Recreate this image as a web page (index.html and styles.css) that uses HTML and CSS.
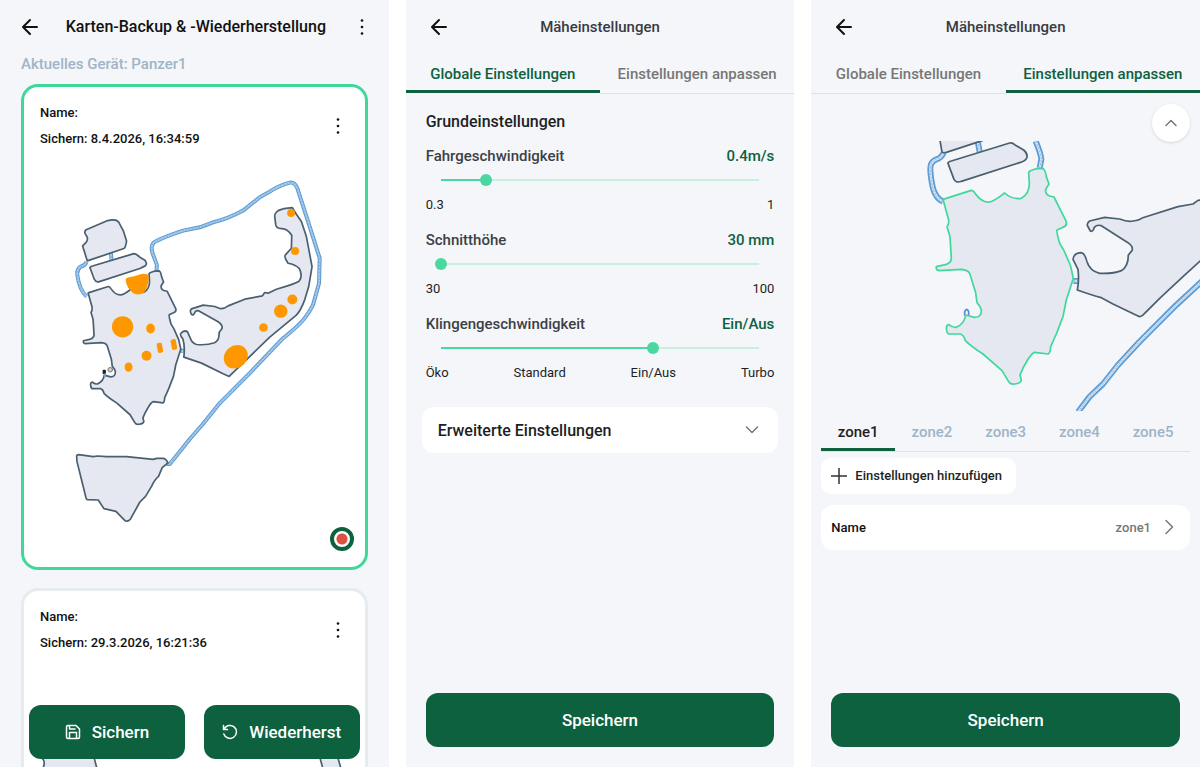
FILE: index.html
```html
<!DOCTYPE html>
<html lang="de">
<head>
<meta charset="utf-8">
<title>Mäheinstellungen</title>
<meta name="viewport" content="width=device-width, initial-scale=1">
<link rel="stylesheet" href="styles.css">
</head>
<body>
<svg class="defs" width="0" height="0" aria-hidden="true">
  <defs>
    <path id="zone-main" vector-effect="non-scaling-stroke" d="M130 208L215 181Q222 181 226 190C240 210 255 218 270 216C285 213 300 200 315 189C330 203 350 207 365 205C380 197 389 180 389 160L387 127Q390 121 412 116L430 115Q437 120 440 140L448 162L438 178Q436 192 450 198L463 201L485 245L500 275Q503 288 490 292L472 300Q470 305 480 340L492 360L512 405L521 445L500 510L490 560L470 612L453 650Q452 670 445 672L405 667Q398 668 385 688Q370 712 361 735L365 750Q364 760 345 762Q332 764 327 755L307 722L250 672Q215 650 197 632Q193 615 182 612L150 612Q142 612 141 600Q138 585 148 584Q160 594 170 592Q195 580 198 555L225 562Q246 562 245 540Q243 530 232 518L228 488L210 430Q205 420 185 418L118 422Q108 420 110 410L140 403Q155 398 155 385L151 320L142 290Q148 285 147 270Z"/>
    <path id="track-home" d="M260 786Q255 798 243 800Q230 808 232 825Q238 870 260 890M333 758L335 782M470 813L471 795L458 760Q450 732 468 724Q500 708 550 692L600 682L640 667Q680 659 730 632L780 592L810 575Q835 558 870 548Q885 546 893 565L930 680L960 775L958 850L940 915Q930 935 915 955Q900 975 845 1020L750 1120L660 1210L610 1272L570 1318L510 1393L500 1393M540 1053H552"/>
    <path id="track-zone" d="M132 68Q125 85 110 88Q92 95 92 115Q92 140 100 175Q108 204 130 215M234 33L240 66M408 33Q425 75 425 88L420 114M521 453H537M910 451L830 525L720 635L655 705L610 762L570 800L535 846"/>
    <symbol id="back" viewBox="0 0 18 18"><path d="M16 9H2.500M9 2L2 9L9 16"/></symbol>
    <symbol id="dots" viewBox="0 0 4 18"><circle cx="2" cy="2.500" r="1.300"/><circle cx="2" cy="9" r="1.300"/><circle cx="2" cy="15.500" r="1.300"/></symbol>
  </defs>
</svg>
<main class="screens">

  <section class="screen" aria-label="Karten-Backup">
    <header class="bar bar-backup">
      <button class="icon-btn" aria-label="Zurück"><svg class="arrow"><use href="#back"/></svg></button>
      <h1 class="title title-dark">Karten-Backup &amp; -Wiederherstellung</h1>
      <button class="icon-btn" aria-label="Menü"><svg class="dots"><use href="#dots"/></svg></button>
    </header>
    <p class="device">Aktuelles Gerät: Panzer1</p>
    <div class="backups">
      <article class="backup backup-active">
        <div class="backup-head">
          <div><p>Name:</p><p>Sichern: 8.4.2026, 16:34:59</p></div>
          <button class="icon-btn" aria-label="Optionen"><svg class="dots"><use href="#dots"/></svg></button>
        </div>
        <svg class="map" viewBox="72 456 1023 1245" role="img" aria-label="Karte">
          <use href="#track-home" class="track"/><use href="#track-home" class="track-mid"/><use href="#track-home" class="track-dash"/>
          <g class="area">
            <path d="M257 690L320 663Q348 655 356 666L370 692L380 723Q377 744 372 746L262 783L248 738L258 728Q264 722 262 712L256 702Q253 696 257 690Z"/>
            <path d="M270 803L273 800L402 761Q408 761 420 772L434 780Q444 790 436 798L420 806L296 846Q288 848 283 838Z"/>
            <use href="#zone-main" transform="translate(172 731) scale(.712)"/>
            <path d="M552 1072L605 1090L670 1122L688 1130L745 1075L810 1012L890 946Q903 932 915 900L927 860L937 800L920 710L905 665L888 640L878 623Q850 625 835 632Q824 640 825 650L828 675Q830 686 845 686Q862 685 876 706L875 745L857 765Q852 770 865 790Q887 794 899 806Q910 830 898 844Q885 852 830 868L805 880L795 878L788 888L735 898L685 918Q672 928 660 926L645 920L610 916L575 927Q569 932 574 942Q581 950 586 936Q592 930 600 935L655 966Q668 974 667 985L658 998Q659 1022 644 1029Q620 1037 590 1034Q576 1030 571 1014L563 996Q553 989 542 1002Q541 1007 549 1017Q556 1040 552 1072Z"/>
            <path d="M230 1368Q231 1365 236 1365L280 1371L293 1369L320 1371H380L460 1379L470 1376H490Q500 1378 504 1390L487 1404L476 1430Q464 1440 455 1460L437 1490L420 1507L392 1558Q382 1570 373 1561L348 1535L312 1527L295 1501L262 1500Q258 1498 257 1490L231 1385Z"/>
          </g>
          <g class="obstacles">
            <path d="M377 838Q380 832 400 830L425 822Q447 820 447 832Q447 850 437 872Q425 890 400 880Q378 862 377 838Z"/>
            <circle cx="368" cy="981" r="32"/><ellipse cx="452" cy="986" rx="13" ry="15"/>
            <rect x="472" y="1029" width="16" height="30" rx="5" transform="rotate(-10 480 1044)"/>
            <rect x="514" y="1018" width="16" height="32" rx="5" transform="rotate(-10 522 1034)"/>
            <circle cx="440" cy="1068" r="15"/><ellipse cx="386" cy="1102" rx="12" ry="14"/>
            <ellipse cx="708" cy="1071" rx="38" ry="33" transform="rotate(-40 708 1071)"/>
            <circle cx="843" cy="934" r="20"/><circle cx="878" cy="899" r="15"/><circle cx="791" cy="983" r="13"/>
            <circle cx="874" cy="639" r="12"/><circle cx="886" cy="753" r="12"/>
          </g>
          <rect class="dock" x="308" y="1110" width="10" height="13" rx="3"/>
          <circle class="mower" cx="331" cy="1110" r="7"/>
          <path class="dock-track" d="M315 1124V1130"/>
        </svg>
        <button class="record" aria-label="Ausgewählt"></button>
      </article>
      <article class="backup">
        <div class="backup-head">
          <div><p>Name:</p><p>Sichern: 29.3.2026, 16:21:36</p></div>
          <button class="icon-btn" aria-label="Optionen"><svg class="dots"><use href="#dots"/></svg></button>
        </div>
        <svg class="map" viewBox="24 656 341 415" role="img" aria-label="Karte">
          <g class="area"><path d="M42 758Q46 762 43 768L41 800H105L94 757ZM320 757L323 768L320 800H350L338 757Z"/></g>
        </svg>
      </article>
    </div>
    <div class="actions">
      <button class="primary"><svg class="act-icon" viewBox="0 0 16 16"><path d="M3 1.500H11L14.500 5V13Q14.500 14.500 13 14.500H3Q1.500 14.500 1.500 13V3Q1.500 1.500 3 1.500ZM4.500 14V8.500H11.500V14M4.500 2V5H10"/></svg>Sichern</button>
      <button class="primary"><svg class="act-icon" viewBox="0 0 16 16"><path d="M1.500 1.500V5.500H5.500M2 5.300A6.500 6.500 0 1 1 1.800 10"/></svg>Wiederherst</button>
    </div>
  </section>

  <section class="screen" aria-label="Globale Einstellungen">
    <header class="bar">
      <button class="icon-btn" aria-label="Zurück"><svg class="arrow"><use href="#back"/></svg></button>
      <h1 class="title">Mäheinstellungen</h1>
    </header>
    <nav class="tabs">
      <button class="tab tab-on">Globale Einstellungen</button>
      <button class="tab">Einstellungen anpassen</button>
    </nav>
    <div class="settings">
      <h2>Grundeinstellungen</h2>
      <div class="setting">
        <div class="setting-head"><label for="speed">Fahrgeschwindigkeit</label><output for="speed">0.4m/s</output></div>
        <input id="speed" type="range" min="0.3" max="1" step="0.1" value="0.4" style="--fill:14.3%">
        <div class="scale"><span>0.3</span><span>1</span></div>
      </div>
      <div class="setting">
        <div class="setting-head"><label for="height">Schnitthöhe</label><output for="height">30 mm</output></div>
        <input id="height" type="range" min="30" max="100" value="30" style="--fill:0%">
        <div class="scale"><span>30</span><span>100</span></div>
      </div>
      <div class="setting">
        <div class="setting-head"><label for="blade">Klingengeschwindigkeit</label><output for="blade">Ein/Aus</output></div>
        <input id="blade" type="range" min="0" max="3" value="2" style="--fill:66.7%">
        <div class="scale"><span>Öko</span><span>Standard</span><span>Ein/Aus</span><span>Turbo</span></div>
      </div>
    </div>
    <button class="advanced">Erweiterte Einstellungen<svg class="chev" viewBox="0 0 16 16"><path d="M2.500 5L8 10.500L13.500 5"/></svg></button>
    <button class="primary save">Speichern</button>
  </section>

  <section class="screen" aria-label="Einstellungen anpassen">
    <header class="bar">
      <button class="icon-btn" aria-label="Zurück"><svg class="arrow"><use href="#back"/></svg></button>
      <h1 class="title">Mäheinstellungen</h1>
    </header>
    <nav class="tabs">
      <button class="tab">Globale Einstellungen</button>
      <button class="tab tab-on">Einstellungen anpassen</button>
    </nav>
    <div class="zone-map">
      <button class="collapse" aria-label="Karte einklappen"><svg class="chev" viewBox="0 0 16 16"><path d="M3 10.500L8 5.500L13 10.500"/></svg></button>
      <svg class="map" viewBox="-266 33 1166 810" role="img" aria-label="Zonenkarte">
        <use href="#track-zone" class="track wide"/><use href="#track-zone" class="track-mid wide"/><use href="#track-zone" class="track-dash"/>
        <path class="dock-outline" d="M195 555V545Q201 531 207 545V555"/>
        <g class="area">
          <path d="M119 20L127 66Q130 70 140 67L250 31V20Z"/>
          <path d="M145 100Q145 95 155 93L330 39Q338 37 345 44L372 60Q384 70 382 82Q380 92 360 98L185 154Q170 160 163 148Z"/>
          <path d="M533 480Q575 495 605 503L640 522L715 558Q725 564 735 550L780 505L850 440L910 385V210L895 211L880 222L835 230L727 264Q722 270 700 273Q685 277 660 267L615 262L570 273Q560 280 564 288L572 303Q580 307 584 292Q592 283 605 287L685 338Q702 350 697 362L686 375Q686 410 665 422Q640 432 600 430Q570 422 562 395Q555 368 543 368Q522 370 520 388L535 418Q539 450 533 480Z"/>
          <use href="#zone-main" class="selected"/>
        </g>
      </svg>
    </div>
    <nav class="zones">
      <button class="zone zone-on">zone1</button><button class="zone">zone2</button><button class="zone">zone3</button><button class="zone">zone4</button><button class="zone">zone5</button>
    </nav>
    <button class="add"><svg class="plus" viewBox="0 0 16 16"><path d="M8 0V16M0 8H16"/></svg>Einstellungen hinzufügen</button>
    <button class="name-row"><span>Name</span><span class="name-value">zone1</span><svg class="chev" viewBox="0 0 16 16"><path d="M5 1.500L11.500 8L5 14.500"/></svg></button>
    <button class="primary save">Speichern</button>
  </section>
</main>
</body>
</html>
```
FILE: styles.css
```css
* { box-sizing: border-box; }
body { margin: 0; background: #fff; color: #1d1f24; font-family: Roboto, "Liberation Sans", sans-serif; font-weight: 500; }
h1, h2, p { margin: 0; font-weight: 500; }
button { margin: 0; padding: 0; border: 0; background: none; color: inherit; font: inherit; cursor: pointer; }
svg { display: block; fill: none; stroke-linecap: round; stroke-linejoin: round; }
.defs { position: absolute; }

.screens { display: grid; grid-template-columns: repeat(3, minmax(0, 1fr)); gap: 17px; height: 100vh; }
.screen { position: relative; display: flex; flex-direction: column; overflow: hidden; background: #f4f6fa; }

.bar { display: grid; grid-template-columns: 32px 1fr 32px; align-items: center; flex: none; height: 54px; padding: 0 17px; }
.bar-backup { grid-template-columns: 20px 1fr 20px; padding: 0 17px 0 20px; }
.icon-btn { display: grid; place-items: center; height: 32px; }
.arrow { width: 18px; height: 18px; stroke: #111; stroke-width: 2; }
.dots { width: 4px; height: 18px; fill: #111; }
.title { text-align: center; font-size: 15px; line-height: 24px; color: #393b42; }
.title-dark { font-size: 16px; color: #111; white-space: nowrap; }

.device { padding: 0 21px; font-size: 15px; line-height: 20px; color: #9fb4c6; }
.backups { display: grid; gap: 18px; padding: 10px 21px 0; }
.backup { position: relative; border: 3px solid #e6ebee; border-radius: 17px; background: #fff; }
.backup-active { border-color: #3fd89a; }
.backup-head { display: flex; justify-content: space-between; align-items: center; padding: 13px 25px 0 16px; font-size: 13px; line-height: 26px; color: #111; }
.map { width: 100%; height: auto; }
.record { position: absolute; right: 11px; bottom: 16px; width: 24px; height: 24px; border: 4px solid #0d613f; border-radius: 50%; background: radial-gradient(circle, #dd5144 5px, #fff 6px); }

.area { fill: #e5e8f0; stroke: #4a5f6f; stroke-width: 1.7; }
.area path { vector-effect: non-scaling-stroke; }
.area .selected { stroke: #3fd89a; }
.track { stroke: #5f9dd4; stroke-width: 12; stroke-linecap: butt; }
.track-mid { stroke: #b9d4ee; stroke-width: 5; stroke-linecap: butt; }
.track-dash { stroke: #5f9dd4; stroke-width: 2; stroke-dasharray: 6 4; stroke-linecap: butt; }
.track.wide { stroke-width: 18; }
.track-mid.wide { stroke: #dbe7f4; stroke-width: 7; }
.obstacles { fill: #ff9800; }
.dock { fill: #222; }
.mower { fill: #ccc; stroke: #777; stroke-width: 3; }
.dock-track { stroke: #6aa8dd; stroke-width: 6; }
.dock-outline { stroke: #5f86cc; stroke-width: 5; }

.actions { position: absolute; right: 29px; bottom: 8px; left: 29px; display: grid; grid-template-columns: 1fr 1fr; gap: 19px; }
.primary { display: flex; justify-content: center; align-items: center; gap: 11px; height: 54px; border-radius: 12px; background: #0d613f; color: #fff; font-size: 17px; }
.act-icon { width: 16px; height: 16px; stroke: #fff; stroke-width: 1.5; }

.tabs { display: grid; grid-template-columns: 1fr 1fr; flex: none; height: 40px; }
.tab { border-bottom: 1px solid #dfe1e4; font-size: 15px; color: #777; }
.tab-on { margin-bottom: 1px; padding-top: 3px; border-bottom: 3px solid #0d613f; color: #0d613f; }

.settings { padding: 16px 20px 0; }
.settings h2 { padding-bottom: 10px; font-size: 16px; line-height: 24px; }
.setting { display: grid; padding-bottom: 10px; }
.setting-head { display: flex; justify-content: space-between; font-size: 15px; line-height: 24px; color: #3d3f46; }
.setting-head output { color: #0d613f; }
.setting input { appearance: none; width: auto; height: 24px; margin: 0 9px; outline: 0; background: linear-gradient(to right, #4ad8a0 var(--fill), #c6f0e0 var(--fill)) center / calc(100% - 12px) 2px no-repeat; }
.setting input::-webkit-slider-thumb { appearance: none; width: 12px; height: 12px; border-radius: 50%; background: #4ad8a0; }
.scale { display: flex; justify-content: space-between; font-size: 13px; font-weight: 400; line-height: 26px; }
.chev { width: 16px; height: 16px; stroke: #777; stroke-width: 1.5; }
.advanced { display: flex; justify-content: space-between; align-items: center; flex: none; height: 46px; margin: 11px 16px 0; padding: 0 18px 0 16px; border-radius: 12px; background: #fff; font-size: 16px; }
.save { flex: none; margin: auto 20px 20px; }

.zone-map { position: relative; padding-top: 47px; }
.collapse { position: absolute; top: 10px; right: 10px; display: grid; place-items: center; width: 38px; height: 38px; border-radius: 50%; background: #fff; box-shadow: 0 1px 3px #0002; }
.zones { display: grid; grid-template-columns: repeat(5, 1fr); flex: none; height: 41px; margin: 0 10px; border-bottom: 1px solid #dfe1e4; }
.zone { padding-top: 2px; color: #9fb4c6; font-size: 15px; }
.zone-on { padding-top: 5px; border-bottom: 3px solid #0d613f; color: #1d1f24; }
.add { display: flex; align-items: center; align-self: flex-start; gap: 8px; flex: none; height: 36px; margin: 6px 10px 0; padding: 0 14px 0 10px; border-radius: 10px; background: #fff; font-size: 13px; }
.plus { width: 16px; height: 16px; stroke: #333; stroke-width: 1.5; }
.name-row { display: flex; align-items: center; flex: none; height: 45px; margin: 11px 10px 0; padding: 0 13px 0 10px; border-radius: 12px; background: #fff; color: #111; font-size: 13px; }
.name-value { margin: 0 10px 0 auto; color: #777; }
```
